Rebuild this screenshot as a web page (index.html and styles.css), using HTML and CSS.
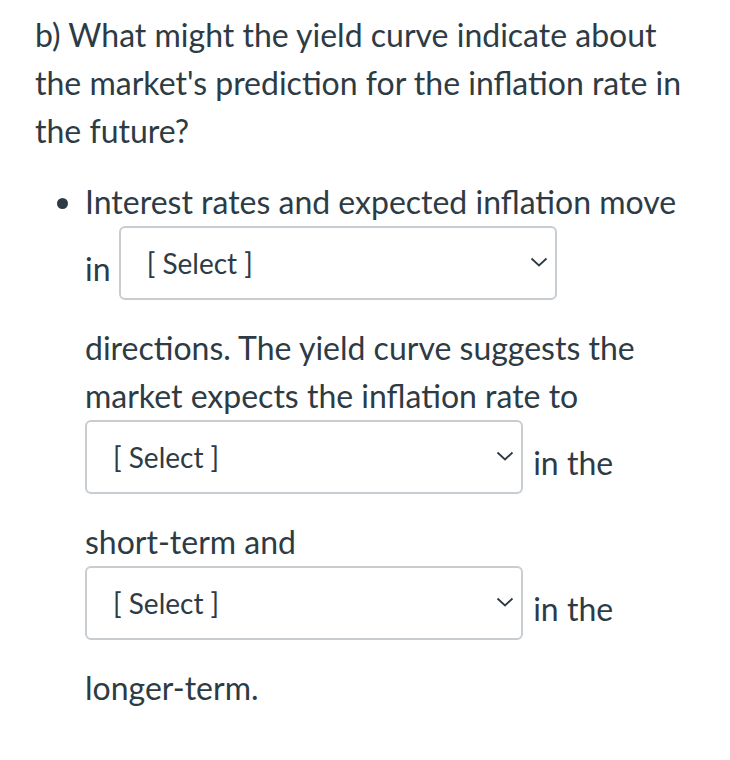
FILE: index.html
```html
<!DOCTYPE html>
<html>
<head>
<meta charset="utf-8">
<link rel="stylesheet" href="styles.css">
</head>
<body>
<div class="question">
  <p class="prompt">b) What might the yield curve indicate about the market's prediction for the inflation rate in the future?</p>
  <ul class="items">
    <li>Interest rates and expected inflation move in <span class="select"><span class="select-text">[ Select ]</span><svg class="chev" width="18" height="10" viewBox="0 0 18 10"><path d="M1.5 1.5 L9 8.5 L16.5 1.5" fill="none" stroke="#2d3b45" stroke-width="1.8"/></svg></span> directions. The yield curve suggests the market expects the inflation rate to <span class="select"><span class="select-text">[ Select ]</span><svg class="chev" width="18" height="10" viewBox="0 0 18 10"><path d="M1.5 1.5 L9 8.5 L16.5 1.5" fill="none" stroke="#2d3b45" stroke-width="1.8"/></svg></span> in the short-term and <span class="select"><span class="select-text">[ Select ]</span><svg class="chev" width="18" height="10" viewBox="0 0 18 10"><path d="M1.5 1.5 L9 8.5 L16.5 1.5" fill="none" stroke="#2d3b45" stroke-width="1.8"/></svg></span> in the longer-term.</li>
  </ul>
</div>
</body>
</html>
```

FILE: styles.css
```css
html, body {
  margin: 0;
  background: #ffffff;
}
body {
  padding: 11px 35px 0 35px;
  font-family: Lato, "Noto Sans", sans-serif;
  font-size: 32px;
  line-height: 48px;
  color: #2d3b45;
}
.question {
  width: 660px;
}
.prompt {
  margin: 0 0 23px 0;
}
.items {
  margin: 0;
  padding-left: 50px;
}
.select {
  display: inline-flex;
  align-items: center;
  justify-content: space-between;
  box-sizing: border-box;
  width: 438px;
  height: 74px;
  border: 2px solid #c7cdd1;
  border-radius: 6px;
  padding: 0 7px 0 26px;
  margin: 0 2px 24px 0;
  font-size: 28px;
  line-height: normal;
  vertical-align: 7px;
  background: #fff;
}
.chev {
  flex: none;
  margin-top: -2px;
}
```
